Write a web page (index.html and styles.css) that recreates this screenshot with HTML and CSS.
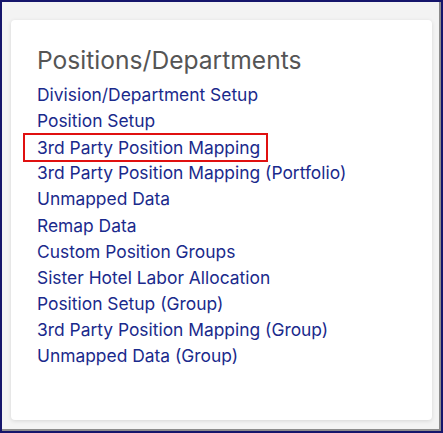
FILE: index.html
```html
<!DOCTYPE html>
<html>
<head>
<meta charset="utf-8">
<link rel="stylesheet" href="styles.css">
</head>
<body>
<div class="frame">
  <div class="inner">
    <div class="card">
      <h2 class="title">Positions/Departments</h2>
      <ul class="links">
        <li><a href="#">Division/Department Setup</a></li>
        <li><a href="#">Position Setup</a></li>
        <li class="selected"><a href="#">3rd Party Position Mapping</a></li>
        <li><a href="#">3rd Party Position Mapping (Portfolio)</a></li>
        <li><a href="#">Unmapped Data</a></li>
        <li><a href="#">Remap Data</a></li>
        <li><a href="#">Custom Position Groups</a></li>
        <li><a href="#">Sister Hotel Labor Allocation</a></li>
        <li><a href="#">Position Setup (Group)</a></li>
        <li><a href="#">3rd Party Position Mapping (Group)</a></li>
        <li><a href="#">Unmapped Data (Group)</a></li>
      </ul>
    </div>
  </div>
</div>
</body>
</html>
```

FILE: styles.css
```css
* { box-sizing: border-box; }
html, body { margin: 0; padding: 0; }
body {
  width: 443px;
  height: 433px;
  font-family: Inter, "Noto Sans", sans-serif;
  overflow: hidden;
}
.frame {
  width: 443px;
  height: 433px;
  border: 2px solid #15156b;
  background: #f3f3f3;
}
.inner {
  height: 100%;
  border-right: 2px solid #8c8c8c;
  border-bottom: 2px solid #8c8c8c;
  padding: 18px 7px 0 9px;
}
.card {
  width: 421px;
  height: 400px;
  background: #fff;
  border-radius: 4px;
  box-shadow: 0 1px 4px rgba(0,0,0,0.12);
  padding: 24px 12px 0 12px;
}
.title {
  margin: 0 0 6px 14px;
  font-size: 24.6px;
  font-weight: 400;
  line-height: 32px;
  color: #555;
}
.links {
  list-style: none;
  margin: 0;
  padding: 0;
}
.links li {
  height: 26.1px;
  display: flex;
  align-items: center;
}
.links a {
  display: block;
  padding: 0 6px 0 12px;
  font-size: 17.4px;
  line-height: 24px;
  color: #1a2a8c;
  text-decoration: none;
  border: 2px solid transparent;
}
.links li.selected a {
  border-color: #e01010;
  height: 29px;
  line-height: 25px;
}
```
